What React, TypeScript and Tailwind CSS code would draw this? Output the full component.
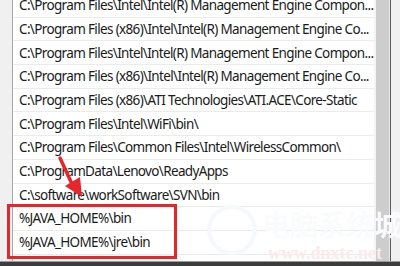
const rows = [
  "C:\\Program Files\\Intel\\Intel(R) Management Engine Compon...",
  "C:\\Program Files (x86)\\Intel\\Intel(R) Management Engine Co...",
  "C:\\Program Files\\Intel\\Intel(R) Management Engine Compon...",
  "C:\\Program Files (x86)\\Intel\\Intel(R) Management Engine Co...",
  "C:\\Program Files (x86)\\ATI Technologies\\ATI.ACE\\Core-Static",
  "C:\\Program Files\\Intel\\WiFi\\bin\\",
  "C:\\Program Files\\Common Files\\Intel\\WirelessCommon\\",
  "C:\\ProgramData\\Lenovo\\ReadyApps",
  "C:\\software\\workSoftware\\SVN\\bin",
  "%JAVA_HOME%\\bin",
  "%JAVA_HOME%\\jre\\bin",
];

const App = () => {
  return (
    <div className="relative w-[400px] h-[266px] overflow-hidden bg-[#f0f0f0] font-['Noto_Sans',sans-serif] flex flex-col">
      <div className="flex flex-1 min-h-0">
        {/* left gutter */}
        <div className="w-[13px] bg-[#f0f0f0] border-r border-[#a8a8a8]" />

        {/* list */}
        <div className="w-[361px] bg-white overflow-hidden">
          <div className="-mt-[6px]">
            {rows.map((r, i) => (
              <div
                key={i}
                className="h-[23.7px] flex items-center pl-[6px] border-b border-[#ebebeb] text-[13.5px] tracking-[-0.65px] text-[#1a1a1a] whitespace-nowrap"
              >
                {r}
              </div>
            ))}
          </div>
        </div>

        {/* scrollbar */}
        <div className="w-[2px] bg-[#f4f4f4]" />
        <div className="w-[13px] bg-[#cdcdcd]" />
        <div className="w-[1px] bg-[#e8e8e8]" />
        <div className="w-[1px] bg-[#5a5a5a]" />
        <div className="flex-1 bg-[#f0f0f0]" />
      </div>
      <div className="h-[1px] bg-[#9a9a9a]" />
      <div className="h-[4px] bg-[#3c3c3c]" />

      {/* watermark */}
      <div className="absolute left-[207px] top-[205px] w-[50px] h-[50px] rounded-full border-[4px] border-[#f6f9fb]" />
      <div className="absolute left-[262px] top-[210px] text-[28px] leading-none font-bold text-[#fafbfc] font-['Noto_Sans_CJK_SC',sans-serif] whitespace-nowrap">
        电脑系统城
      </div>
      <div className="absolute left-[268px] top-[244px] text-[18px] leading-none font-bold text-[#fbeaea] font-['Liberation_Serif',serif] whitespace-nowrap">
        www.dnxtc.net
      </div>

      {/* red highlight box */}
      <div className="absolute left-[7px] top-[204px] w-[170px] h-[55px] border-[3px] border-[#e5262a]" />

      {/* red arrow */}
      <svg className="absolute left-0 top-0" width="400" height="266" viewBox="0 0 400 266">
        <line x1="60" y1="158" x2="72" y2="184" stroke="#e5262a" strokeWidth="3.5" strokeLinecap="round" />
        <polygon points="82,197 65,186 80,177" fill="#e5262a" />
      </svg>
    </div>
  );
};

export default App;
